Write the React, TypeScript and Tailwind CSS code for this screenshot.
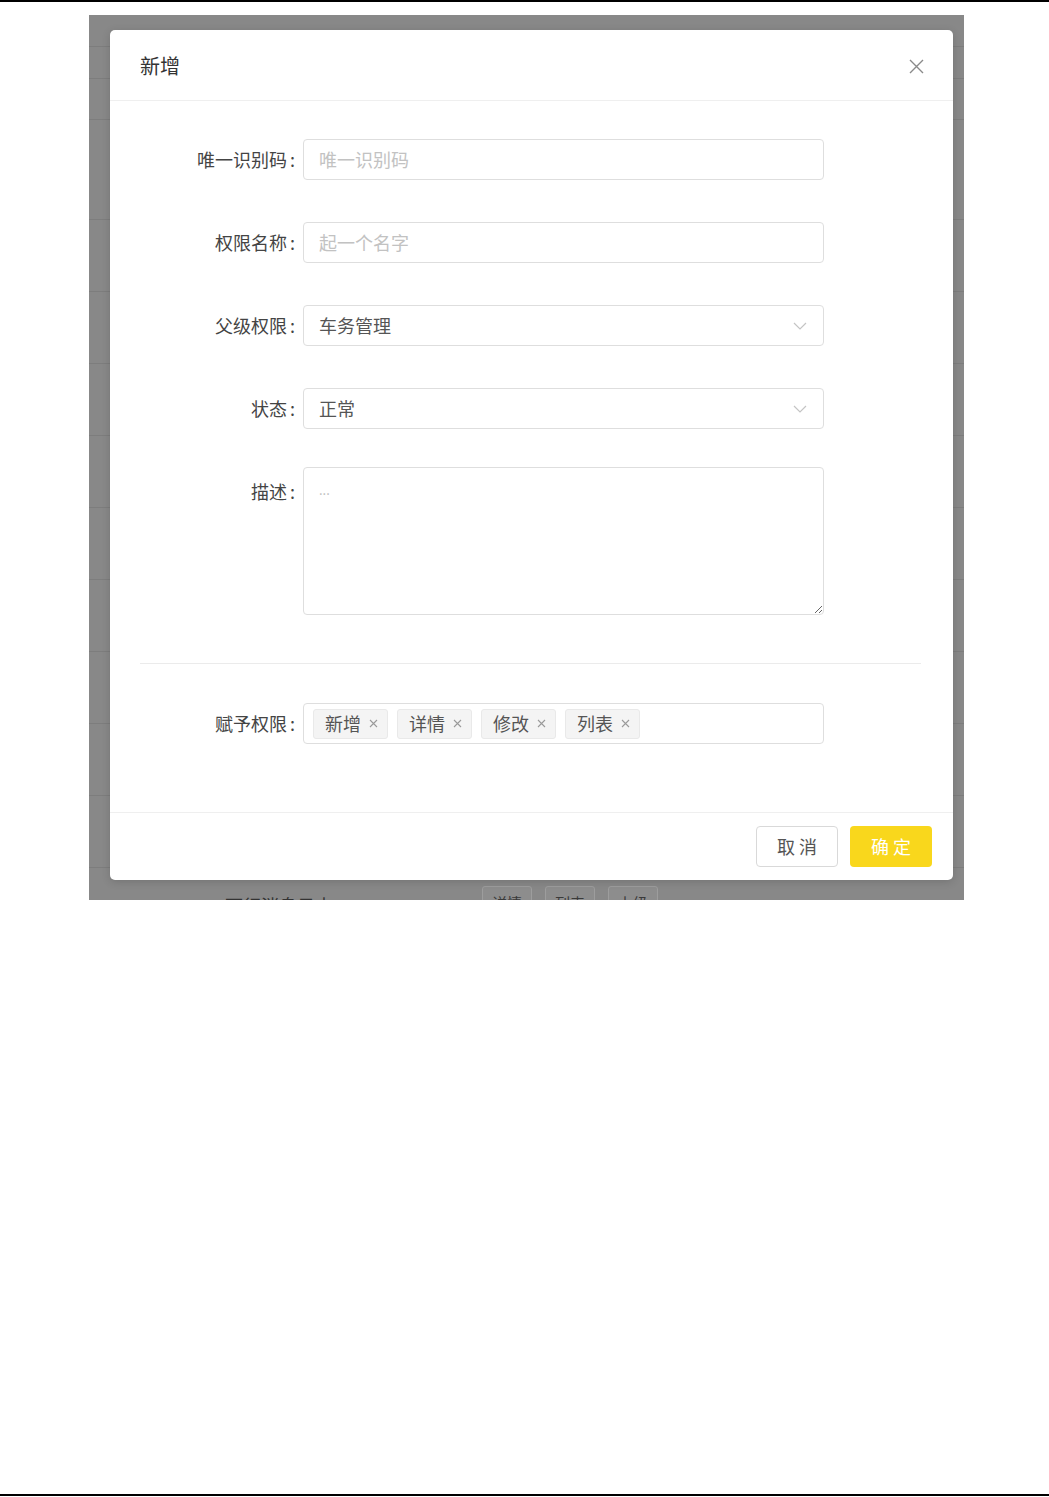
import React from 'react'

const FONT = { fontFamily: '"Noto Sans CJK SC", "Noto Sans", sans-serif' }

// rows of the page that sits behind the grey overlay
const backRows = [32, 32, 41, 100, 72, 72, 72, 72, 72, 72, 72, 72, 72]

const Chevron: React.FC = () => (
  <svg width="14" height="8" viewBox="0 0 14 8" fill="none">
    <path d="M1 1l6 6 6-6" stroke="#c4c4c4" strokeWidth="1.2" />
  </svg>
)

const TagClose: React.FC = () => (
  <svg width="9" height="9" viewBox="0 0 9 9" fill="none">
    <path d="M1 1l7 7M8 1l-7 7" stroke="#9a9a9a" strokeWidth="1.1" />
  </svg>
)

const FormRow: React.FC<{ label: string; className?: string; children: React.ReactNode }> = ({
  label,
  className = '',
  children,
}) => (
  <div className={`flex items-center h-[41px] ${className}`}>
    <div className="w-[193px] pr-[8px] text-right text-[18px] text-[#444] shrink-0">
      {label}
      <span className="ml-[3px]">:</span>
    </div>
    {children}
  </div>
)

const App: React.FC = () => {
  const tags = ['新增', '详情', '修改', '列表']

  return (
    <div className="bg-white h-[1497px] flex flex-col" style={FONT}>
      <div className="h-[2px] bg-black shrink-0" />

      {/* screenshot of the dialog */}
      <div className="relative mt-[13px] ml-[89px] w-[875px] h-[885px] bg-[#888888] overflow-hidden shrink-0">
        <div className="flex flex-col">
          {backRows.map((h, i) => (
            <div key={i} className="border-b border-[#7d7d7d]" style={{ height: h }} />
          ))}
          <div className="flex items-start pt-[18px] pl-[136px]">
            <div className="w-[257px] pt-[6px] text-[18px] text-[#333]">下行消息日志</div>
            <div className="flex gap-[13px]">
              {['详情', '列表', '上级'].map(b => (
                <div
                  key={b}
                  className="w-[50px] h-[34px] border border-[#9d9d9d] rounded-[3px] bg-[#8d8d8d] flex items-center justify-center text-[15px] text-[#3a3a3a]"
                >
                  {b}
                </div>
              ))}
            </div>
          </div>
        </div>

        {/* modal */}
        <div className="absolute left-[21px] top-[15px] w-[843px] h-[850px] bg-white rounded-[5px] shadow-[0_2px_8px_rgba(0,0,0,0.15)] flex flex-col">
          <div className="h-[71px] shrink-0 flex items-center justify-between pl-[30px] pr-[29px] pt-[2px] border-b border-[#efefef]">
            <span className="text-[20px] text-[#333]">新增</span>
            <svg width="15" height="15" viewBox="0 0 15 15" fill="none">
              <path d="M1 1l13 13M14 1L1 14" stroke="#8a8a8a" strokeWidth="1.4" />
            </svg>
          </div>

          <div className="pt-[38px] flex flex-col">
            <FormRow label="唯一识别码">
              <div className="w-[521px] h-[41px] border border-[#dedede] rounded-[4px] pl-[15px] flex items-center text-[18px] text-[#c2c2c2]">
                唯一识别码
              </div>
            </FormRow>

            <FormRow label="权限名称" className="mt-[42px]">
              <div className="w-[521px] h-[41px] border border-[#dedede] rounded-[4px] pl-[15px] flex items-center text-[18px] text-[#c2c2c2]">
                起一个名字
              </div>
            </FormRow>

            <FormRow label="父级权限" className="mt-[42px]">
              <div className="w-[521px] h-[41px] border border-[#dedede] rounded-[4px] pl-[15px] pr-[16px] flex items-center justify-between text-[18px] text-[#555]">
                <span>车务管理</span>
                <Chevron />
              </div>
            </FormRow>

            <FormRow label="状态" className="mt-[42px]">
              <div className="w-[521px] h-[41px] border border-[#dedede] rounded-[4px] pl-[15px] pr-[16px] flex items-center justify-between text-[18px] text-[#555]">
                <span>正常</span>
                <Chevron />
              </div>
            </FormRow>

            <div className="flex items-start mt-[38px]">
              <div className="w-[193px] h-[41px] mt-[4px] pr-[8px] flex items-center justify-end text-[18px] text-[#444] shrink-0">
                描述<span className="ml-[3px]">:</span>
              </div>
              <textarea
                readOnly
                placeholder="..."
                className="w-[521px] h-[148px] border border-[#dedede] rounded-[4px] px-[15px] pt-[12px] text-[13px] placeholder:text-[#bbbbbb] outline-none"
              />
            </div>

            <div className="mt-[48px] ml-[30px] mr-[32px] h-px bg-[#ebebeb]" />

            <FormRow label="赋予权限" className="mt-[39px]">
              <div className="w-[521px] h-[41px] border border-[#dedede] rounded-[4px] pl-[9px] flex items-center gap-[9px]">
                {tags.map(t => (
                  <div
                    key={t}
                    className="h-[30px] pl-[11px] pr-[9px] bg-[#f4f4f4] border border-[#e9e9e9] rounded-[3px] flex items-center gap-[8px] text-[18px] text-[#555]"
                  >
                    <span>{t}</span>
                    <TagClose />
                  </div>
                ))}
              </div>
            </FormRow>
          </div>

          <div className="mt-auto h-[68px] shrink-0 border-t border-[#efefef] flex items-center justify-end gap-[12px] pr-[21px]">
            <button className="w-[82px] h-[41px] border border-[#d9d9d9] rounded-[4px] bg-white text-[18px] text-[#555]">
              取 消
            </button>
            <button className="w-[82px] h-[41px] rounded-[4px] bg-[#f9d71c] text-[18px] text-white">
              确 定
            </button>
          </div>
        </div>
      </div>

      <div className="mt-auto mb-[1px] h-[2px] bg-black shrink-0" />
    </div>
  )
}

export default App
